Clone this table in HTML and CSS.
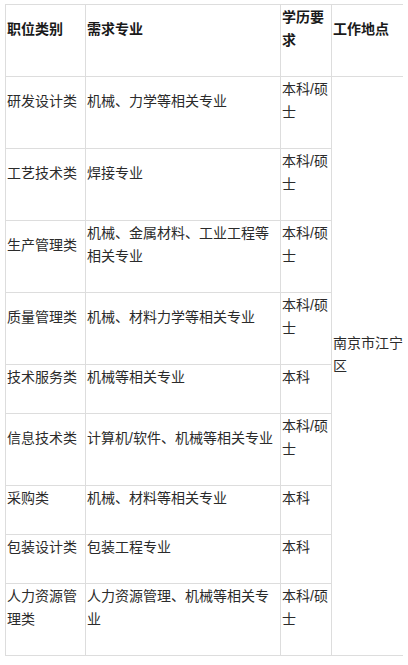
FILE: index.html
```html
<!DOCTYPE html>
<html lang="zh-CN">
<head>
<meta charset="utf-8">
<link rel="stylesheet" href="styles.css">
</head>
<body>
<table class="jobs">
  <colgroup>
    <col class="c1"><col class="c2"><col class="c3"><col class="c4">
  </colgroup>
  <thead>
    <tr><th>职位类别</th><th>需求专业</th><th>学历要求</th><th>工作地点</th></tr>
  </thead>
  <tbody>
    <tr><td>研发设计类</td><td>机械、力学等相关专业</td><td>本科/硕士</td><td class="loc" rowspan="9">南京市江宁区</td></tr>
    <tr><td>工艺技术类</td><td>焊接专业</td><td>本科/硕士</td></tr>
    <tr><td>生产管理类</td><td>机械、金属材料、工业工程等相关专业</td><td>本科/硕士</td></tr>
    <tr><td>质量管理类</td><td>机械、材料力学等相关专业</td><td>本科/硕士</td></tr>
    <tr><td>技术服务类</td><td>机械等相关专业</td><td>本科</td></tr>
    <tr><td>信息技术类</td><td>计算机/软件、机械等相关专业</td><td>本科/硕士</td></tr>
    <tr><td>采购类</td><td>机械、材料等相关专业</td><td>本科</td></tr>
    <tr><td>包装设计类</td><td>包装工程专业</td><td>本科</td></tr>
    <tr><td>人力资源管理类</td><td>人力资源管理、机械等相关专业</td><td>本科/硕士</td></tr>
  </tbody>
</table>
</body>
</html>
```
FILE: styles.css
```css
html, body {
  background: #ffffff;
}
body {
  margin: 4px 5px;
  font-family: "Liberation Sans", "Noto Sans CJK SC", sans-serif;
  font-size: 14px;
  color: #2b2b2b;
}
.jobs {
  border-collapse: collapse;
  table-layout: fixed;
  width: 398px;
}
.c1 { width: 80px; }
.c2 { width: 195px; }
.c3 { width: 51px; }
.c4 { width: 72px; }
.jobs th,
.jobs td {
  border: 1px solid #dddddd;
  padding: 1px 1px 24px 1px;
  line-height: 23px;
  text-align: left;
  vertical-align: middle;
  word-break: break-all;
}
.jobs .loc {
  padding-right: 0;
}
.jobs th {
  font-weight: bold;
  color: #1a1a1a;
}
```
